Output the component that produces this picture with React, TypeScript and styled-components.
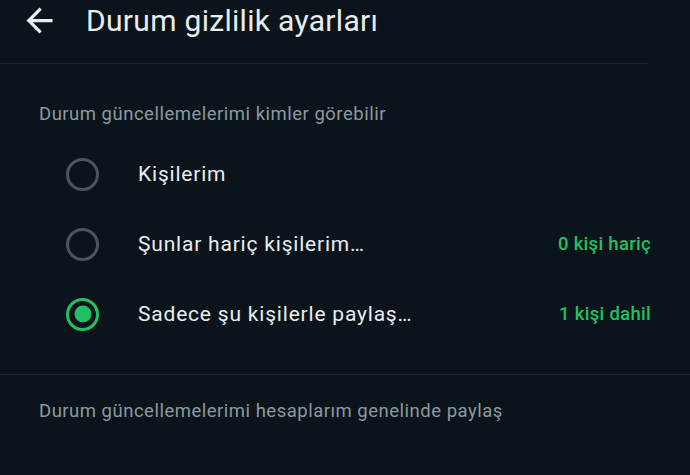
import styled, { createGlobalStyle } from "styled-components";

const GlobalStyle = createGlobalStyle`
  html, body {
    margin: 0;
    padding: 0;
    background: #0b141a;
  }
  body {
    font-family: Roboto, "Noto Sans", "Liberation Sans", sans-serif;
    color: #e9edef;
  }
`;

type Option = {
  label: string;
  note?: string;
  checked?: boolean;
};

const options: Option[] = [
  { label: "Kişilerim" },
  { label: "Şunlar hariç kişilerim…", note: "0 kişi hariç" },
  { label: "Sadece şu kişilerle paylaş…", note: "1 kişi dahil", checked: true },
];

export default function App() {
  return (
    <>
      <GlobalStyle />
      <Screen>
        <TopBar>
          <BackButton aria-label="Geri">
            <svg width="39" height="39" viewBox="0 0 24 24" fill="#e9edef">
              <path d="M20 11H7.83l5.59-5.59L12 4l-8 8 8 8 1.41-1.41L7.83 13H20v-2z" />
            </svg>
          </BackButton>
          <Title>Durum gizlilik ayarları</Title>
        </TopBar>
        <Divider $short />
        <Section>
          <SectionTitle>Durum güncellemelerimi kimler görebilir</SectionTitle>
          <OptionList>
            {options.map((o) => (
              <OptionRow key={o.label}>
                <Radio $checked={!!o.checked} />
                <OptionLabel>{o.label}</OptionLabel>
                {o.note && <Note>{o.note}</Note>}
              </OptionRow>
            ))}
          </OptionList>
        </Section>
        <Divider />
        <FooterText>Durum güncellemelerimi hesaplarım genelinde paylaş</FooterText>
      </Screen>
    </>
  );
}

const Screen = styled.div`
  width: 690px;
  height: 475px;
  overflow: hidden;
  background: #0b141a;
`;

const TopBar = styled.header`
  display: flex;
  align-items: center;
  height: 40px;
  padding: 0 0 0 20px;
  margin-bottom: 23px;
  gap: 27px;
`;

const BackButton = styled.div`
  display: flex;
  align-items: center;
  justify-content: center;
  width: 39px;
  height: 39px;
`;

const Title = styled.h1`
  margin: 0;
  font-size: 30px;
  font-weight: 400;
  color: #e9edef;
  letter-spacing: 0.3px;
`;

const Divider = styled.div<{ $short?: boolean }>`
  height: 1px;
  background: #1c262d;
  margin-right: ${(p) => (p.$short ? "42px" : "0")};
`;

const Section = styled.section`
  padding: 38px 0 25px;
`;

const SectionTitle = styled.div`
  padding-left: 39px;
  font-size: 18.5px;
  line-height: 24px;
  color: #8d999f;
  letter-spacing: 0.5px;
  margin-bottom: 13px;
`;

const OptionList = styled.div`
  display: flex;
  flex-direction: column;
`;

const OptionRow = styled.div`
  display: flex;
  align-items: center;
  height: 70px;
  padding: 0 39px 0 66px;
`;

const Radio = styled.span<{ $checked: boolean }>`
  position: relative;
  box-sizing: border-box;
  flex: none;
  width: 33px;
  height: 33px;
  border-radius: 50%;
  border: 3px solid ${(p) => (p.$checked ? "#21c063" : "#4a565e")};
  margin-right: 39px;
  &::after {
    content: "";
    display: ${(p) => (p.$checked ? "block" : "none")};
    position: absolute;
    left: 50%;
    top: 50%;
    width: 17px;
    height: 17px;
    border-radius: 50%;
    background: #21c063;
    transform: translate(-50%, -50%);
  }
`;

const OptionLabel = styled.span`
  flex: 1;
  font-size: 21px;
  letter-spacing: 0.8px;
  color: #e9edef;
`;

const Note = styled.span`
  font-size: 18.5px;
  font-weight: 500;
  letter-spacing: 0.3px;
  color: #21c063;
`;

const FooterText = styled.div`
  padding: 24px 0 0 39px;
  font-size: 18.5px;
  line-height: 24px;
  color: #8d999f;
  letter-spacing: 0.5px;
`;
